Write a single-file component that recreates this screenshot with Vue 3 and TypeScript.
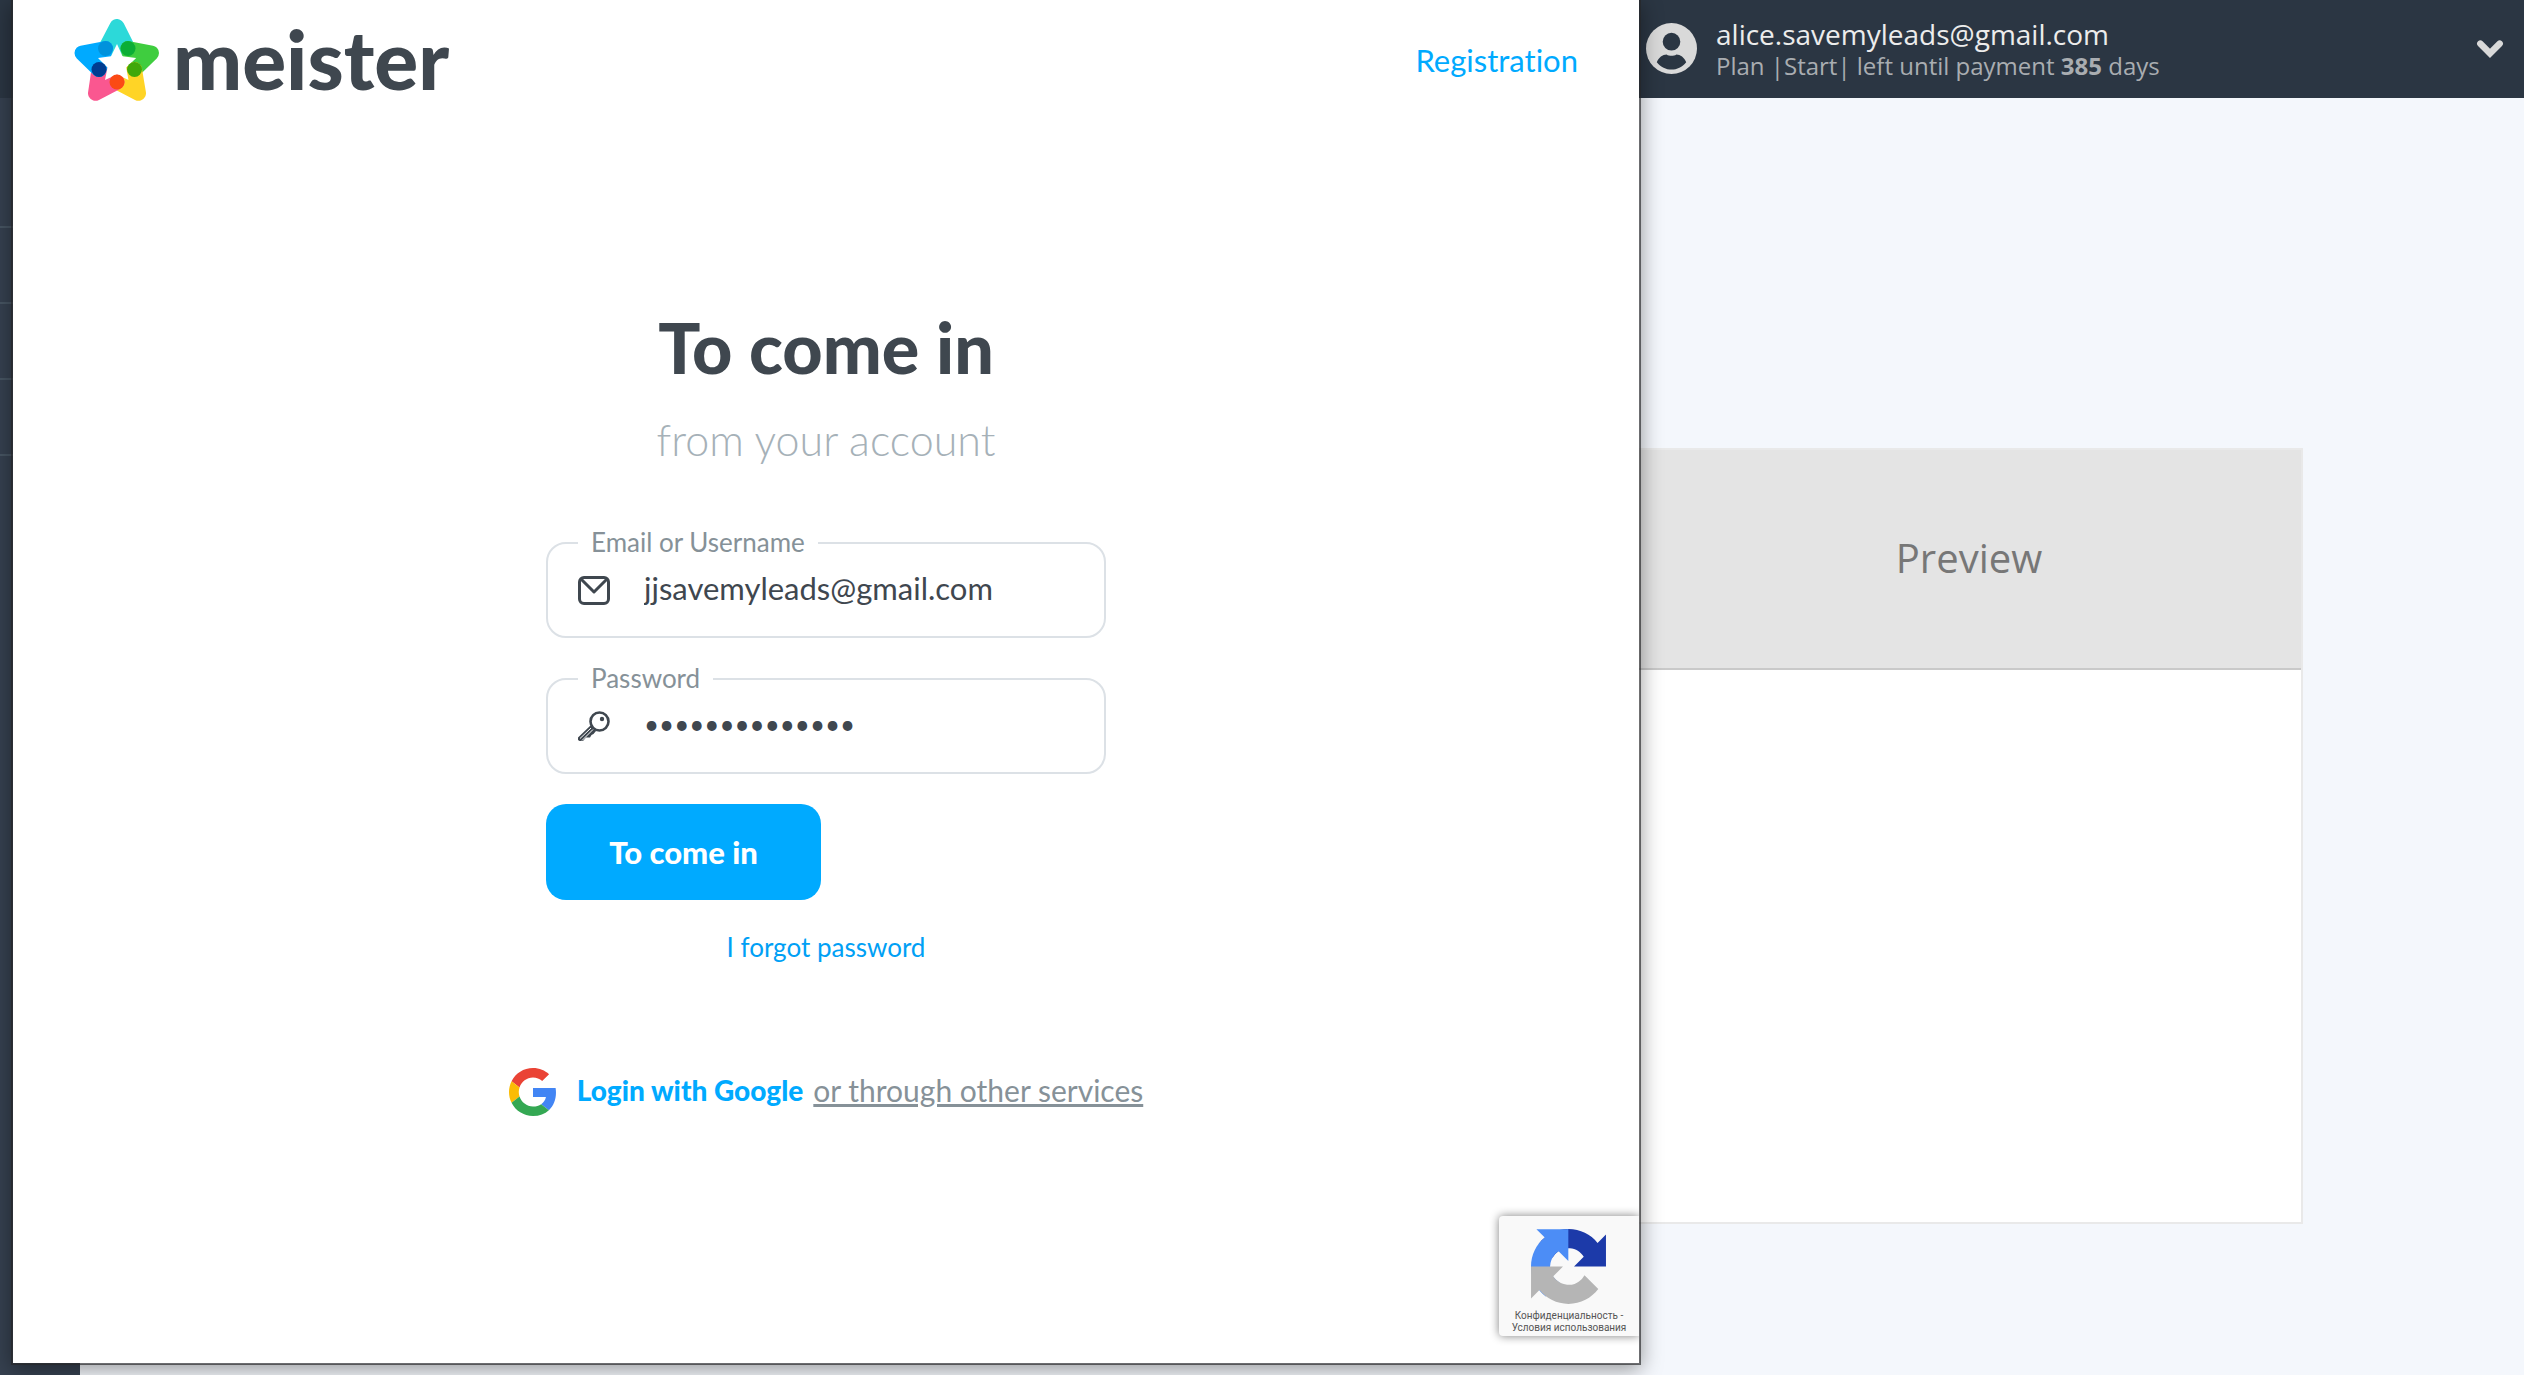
<script setup lang="ts">
import { ref } from 'vue'

const login = ref('jjsavemyleads@gmail.com')
const password = ref('savemyleads123')
const sections = ['home', 'connections', 'billing', 'history']
</script>

<template>
  <div class="page">
    <header class="topbar">
      <div class="account">
        <svg class="avatar" viewBox="0 0 52 52" aria-hidden="true">
          <circle cx="26" cy="26" r="26" fill="#d9d9d9" />
          <ellipse cx="26" cy="19" rx="9" ry="9" fill="#2b3643" />
          <path d="M11 40c2-5 6-8 10-8 3 2 7 2 10 0 4 0 8 3 10 8-8 10-22 10-30 0z" fill="#2b3643" />
        </svg>
        <div class="who">
          <div class="mail">alice.savemyleads@gmail.com</div>
          <div class="plan">Plan |Start| left until payment <b>385</b> days</div>
        </div>
        <button class="toggle" type="button" aria-label="Account menu">
          <svg viewBox="0 0 26 18" aria-hidden="true"><path d="M4 4l9 9 9-9" fill="none" stroke="#d9d9d9" stroke-width="6" stroke-linecap="round" /></svg>
        </button>
      </div>
    </header>

    <div class="body">
      <nav class="sidebar" aria-label="Sections">
        <div v-for="item in sections" :key="item" class="slot"></div>
      </nav>
      <main class="content">
        <section class="preview">
          <h2>Preview</h2>
          <div class="preview-body"></div>
        </section>
      </main>
    </div>

    <div class="popup">
      <header class="popup-head">
        <a class="brand" href="#">
          <svg class="star" viewBox="74 19 85 82" aria-hidden="true">
            <g stroke-width="15" stroke-linejoin="round">
              <path d="M117 26.500L105.500 48.500H128z" fill="#2cd9d9" stroke="#2cd9d9" />
              <path d="M151.500 53L128 48.500l6.500 21z" fill="#3fcd3f" stroke="#3fcd3f" />
              <path d="M138.500 93.300L134.500 69.500 117 82z" fill="#ffd426" stroke="#ffd426" />
              <path d="M95.500 93.300L99 69.500 117 82z" fill="#fa5790" stroke="#fa5790" />
              <path d="M82 53l23.500-4.500-6.500 21z" fill="#00aaff" stroke="#00aaff" />
            </g>
            <path d="M117 44l5.500 12.300 13.700 1.700-10 9.500 2.300 12.500-11.500-5.500-12 5.500 2.500-12.500-9.500-9.500 13-1.700z" fill="#fff" />
            <circle cx="105.500" cy="48.500" r="7.500" fill="#0092dc" />
            <circle cx="128" cy="48.500" r="7.500" fill="#0bae36" />
            <circle cx="134.500" cy="69.500" r="7.500" fill="#40a80a" />
            <circle cx="117" cy="82" r="7.500" fill="#fb4a14" />
            <circle cx="99" cy="69.500" r="7.500" fill="#003c90" />
          </svg>
          <span class="wordmark">meister</span>
        </a>
        <a class="register" href="#">Registration</a>
      </header>

      <div class="signin">
        <h1>To come in</h1>
        <p class="sub">from your account</p>
        <form @submit.prevent>
          <div class="field">
            <label for="login">Email or Username</label>
            <svg viewBox="0 0 32 30" fill="none" stroke="#3f474f" stroke-width="3" stroke-linejoin="round" aria-hidden="true">
              <rect x="1.500" y="2.500" width="29" height="26" rx="4.500" />
              <path d="M3 4l13 13L29 4" />
            </svg>
            <input id="login" v-model="login" type="text" />
          </div>
          <div class="field">
            <label for="password">Password</label>
            <svg viewBox="0 0 32 30" fill="none" stroke="#3f474f" aria-hidden="true">
              <circle cx="21.500" cy="10.500" r="9" stroke-width="2.600" />
              <circle cx="24" cy="8" r="2.200" fill="#3f474f" stroke="none" />
              <path d="M12.500 14.500L0 26.500V29l1.500 1H5l3-3.500h4l1.500-2.500 2-1 2.500-3z" fill="#3f474f" stroke="none" />
              <path d="M2 27.500l11-10.500M4 29.500l11-11" stroke="#fff" stroke-width="1" />
            </svg>
            <input id="password" v-model="password" type="password" />
          </div>
          <button class="submit" type="submit">To come in</button>
        </form>
        <a class="forgot" href="#">I forgot password</a>
        <div class="social">
          <svg viewBox="0 0 48 48" aria-hidden="true">
            <path fill="#EA4335" d="M24 9.500c3.540 0 6.710 1.220 9.210 3.600l6.850-6.850C35.900 2.380 30.470 0 24 0 14.620 0 6.510 5.380 2.560 13.220l7.980 6.190C12.430 13.720 17.740 9.500 24 9.500z" />
            <path fill="#4285F4" d="M46.980 24.550c0-1.570-.15-3.090-.38-4.550H24v9.020h12.940c-.58 2.960-2.260 5.480-4.780 7.180l7.730 6c4.510-4.180 7.090-10.360 7.090-17.650z" />
            <path fill="#FBBC05" d="M10.530 28.590c-.48-1.450-.76-2.990-.76-4.590s.27-3.140.76-4.590l-7.980-6.190C.92 16.460 0 20.120 0 24s.92 7.540 2.560 10.780l7.970-6.190z" />
            <path fill="#34A853" d="M24 48c6.480 0 11.930-2.130 15.890-5.810l-7.730-6c-2.150 1.450-4.920 2.300-8.160 2.300-6.260 0-11.570-4.220-13.470-9.910l-7.980 6.190C6.510 42.620 14.620 48 24 48z" />
          </svg>
          <a class="google" href="#">Login with Google</a>
          <a class="others" href="#">or through other services</a>
        </div>
      </div>

      <aside class="captcha">
        <svg viewBox="0 0 64 64" aria-hidden="true">
          <path fill="#1c3aa9" d="M64 31.955l-.033-1.370V4.687l-7.160 7.160C50.948 4.674 42.033.093 32.050.093c-10.400 0-19.622 4.960-25.458 12.640l11.736 11.860a15.550 15.550 0 0 1 4.754-5.334c2.050-1.600 4.952-2.906 8.968-2.906.485 0 .86.057 1.135.163 4.976.393 9.288 3.140 11.828 7.124l-8.307 8.307L64 31.953" />
          <path fill="#4c8df6" d="M31.862.094l-1.370.033H4.594l7.160 7.160C4.580 13.147 0 22.060 0 32.046c0 10.400 4.960 19.622 12.640 25.458L24.500 45.768a15.550 15.550 0 0 1-5.334-4.754c-1.600-2.050-2.906-4.952-2.906-8.968 0-.485.057-.86.163-1.135.393-4.976 3.140-9.288 7.124-11.828l8.307 8.307L31.860.095" />
          <path fill="#b5b5b5" d="M.001 32.045l.033 1.370v25.898l7.160-7.160c5.860 7.173 14.774 11.754 24.760 11.754 10.400 0 19.622-4.960 25.458-12.640l-11.736-11.860a15.550 15.550 0 0 1-4.754 5.334c-2.050 1.600-4.952 2.906-8.968 2.906-.485 0-.86-.057-1.135-.163-4.976-.393-9.288-3.140-11.828-7.124l8.307-8.307c-10.522.040-22.400.066-27.295-.005" />
        </svg>
        <p><a href="#">Конфиденциальность</a> -<br /><a href="#">Условия использования</a></p>
      </aside>
    </div>
  </div>
</template>

<style>
body {
  margin: 0;
  background: #f4f7fc;
}
</style>

<style scoped>
* {
  box-sizing: border-box;
}

a {
  text-decoration: none;
}

.page {
  position: relative;
  display: flex;
  flex-direction: column;
  min-height: 100vh;
  overflow: hidden;
  font-family: Lato, sans-serif;
  font-variant-ligatures: none;
  background: #f4f7fc;
}

.topbar {
  display: flex;
  justify-content: flex-end;
  height: 98px;
  padding-right: 20px;
  background: #2b3643;
  font-family: "Open Sans", sans-serif;
}

.account {
  display: flex;
  align-items: center;
  width: 858px;
}

.avatar {
  width: 51px;
  height: 51px;
  margin: 0 19px 2px 0;
}

.who {
  flex: 1;
}

.mail {
  color: #ececec;
  font-size: 28px;
  line-height: 34px;
}

.plan {
  color: #a9adb1;
  font-size: 24px;
  line-height: 30px;
}

.toggle {
  display: flex;
  padding: 0;
  border: 0;
  background: none;
}

.toggle svg {
  width: 28px;
  height: 20px;
}

.body {
  display: flex;
  flex: 1;
}

.sidebar {
  width: 80px;
  padding-top: 54px;
  background: #364150;
}

.slot {
  height: 76px;
  border-bottom: 2px solid #475563;
}

.content {
  display: flex;
  flex: 1;
  justify-content: flex-end;
  align-items: flex-start;
  padding: 350px 221px 0 0;
}

.preview {
  width: 668px;
  border: 2px solid #e9e9e9;
  background: #fff;
}

.preview h2 {
  margin: 0;
  padding: 80px 0 82px;
  border-bottom: 2px solid #c9c9c9;
  background: #e4e4e4;
  color: #777;
  font: 400 40px/56px "Open Sans", sans-serif;
  text-align: center;
}

.preview-body {
  height: 552px;
}

.popup {
  position: absolute;
  top: 0;
  right: 883px;
  bottom: 10px;
  left: 11px;
  border: 2px solid rgba(38, 38, 40, 0.66);
  border-top: 0;
  background: #fff;
  background-clip: padding-box;
  box-shadow: 0 4px 20px rgba(0, 0, 0, 0.4);
}

.popup-head {
  display: flex;
  justify-content: space-between;
  align-items: center;
  height: 120px;
  padding: 0 61px;
}

.brand {
  display: flex;
  align-items: center;
  color: #3f474f;
}

.star {
  width: 85px;
  height: 82px;
  margin-right: 14px;
}

.wordmark {
  padding-bottom: 4px;
  font-size: 82px;
  font-weight: 900;
  line-height: 96px;
}

.register {
  color: #00aaff;
  font-size: 31px;
}

.signin {
  display: flex;
  flex-direction: column;
  align-items: center;
  padding-top: 187px;
}

h1 {
  margin: 0;
  color: #3f474f;
  font-size: 70px;
  font-weight: 900;
  line-height: 80px;
}

.sub {
  margin: 27px 0 76px;
  color: #a6b1b8;
  font-size: 43px;
  font-weight: 300;
  line-height: 52px;
}

form {
  width: 560px;
}

.field {
  position: relative;
  display: flex;
  align-items: center;
  height: 96px;
  margin-bottom: 40px;
  padding: 0 30px;
  border: 2px solid #dce1e6;
  border-radius: 20px;
}

.field label {
  position: absolute;
  top: -17px;
  left: 30px;
  padding: 0 13px;
  background: #fff;
  color: #869198;
  font-size: 26px;
  line-height: 30px;
}

.field svg {
  width: 32px;
  height: 30px;
  margin-right: 34px;
}

.field input {
  flex: 1;
  min-width: 0;
  padding: 0 0 4px;
  border: 0;
  outline: 0;
  background: none;
  color: #3f474f;
  font: 400 31px/40px Lato, sans-serif;
}

.field input[type="password"] {
  font-size: 26px;
}

.submit {
  display: block;
  width: 275px;
  height: 96px;
  margin-top: -10px;
  border: 0;
  border-radius: 20px;
  background: #00aaff;
  color: #fff;
  font: 900 31px/40px Lato, sans-serif;
}

.forgot {
  margin-top: 31px;
  color: #00a0f5;
  font-size: 26px;
  line-height: 32px;
}

.social {
  display: flex;
  align-items: center;
  margin-top: 105px;
}

.social svg {
  width: 48px;
  height: 48px;
  margin-right: 20px;
}

.social a {
  padding-bottom: 4px;
}

.google {
  margin-right: 10px;
  color: #00aaff;
  font-size: 28px;
  font-weight: 900;
}

.others {
  color: #869198;
  font-size: 30px;
  text-decoration: underline;
  text-decoration-thickness: 3px;
}

.captcha {
  position: absolute;
  right: 0;
  bottom: 27px;
  width: 140px;
  height: 120px;
  padding-top: 13px;
  border-radius: 4px 0 0 4px;
  background: #f9f9f9;
  box-shadow: 0 0 10px #808080;
  clip-path: inset(-12px 0 -12px -12px);
  text-align: center;
}

.captcha svg {
  display: block;
  width: 75px;
  height: 75px;
  margin-left: 32px;
}

.captcha p {
  margin: 6px 0 0;
  color: #555;
  font: 10px/12px Roboto, sans-serif;
}

.captcha a {
  color: #555;
}
</style>
